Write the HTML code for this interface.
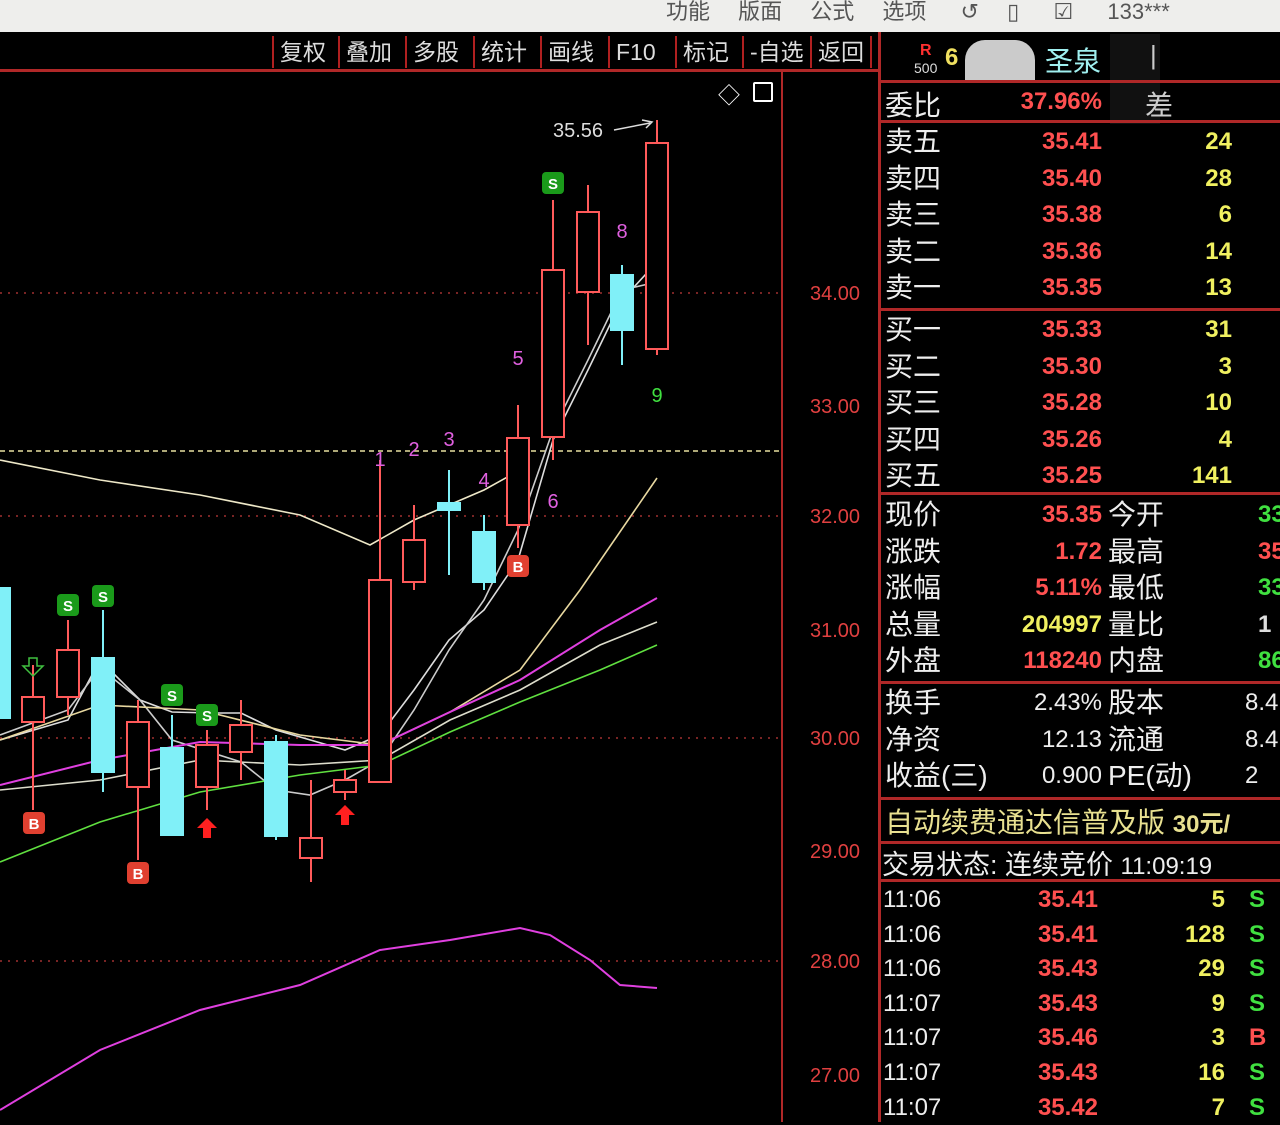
<!DOCTYPE html>
<html><head><meta charset="utf-8"><style>
body{margin:0;width:1280px;height:1122px;background:#000;overflow:hidden;position:relative;font-family:"Liberation Sans","Noto Sans CJK SC",sans-serif}
.a{position:absolute;white-space:nowrap}
.top{left:0;top:0;width:1280px;height:32px;background:#eeeeec}
.tb{top:36px;height:32px;line-height:32px;font-size:23px;color:#ddd;border-left:2px solid #b02020;padding:0 6px}
.lab{left:885px;font-size:28px;color:#eee}
.red{color:#ff5050;font-weight:bold;font-size:24px;text-align:right}
.yel{color:#f0f060;font-weight:bold;font-size:24px;text-align:right}
.grn{color:#40e040;font-weight:bold;font-size:24px}
.wht{color:#eee;font-weight:bold;font-size:24px;text-align:right}
.hl{height:3px;background:#b02828;left:880px;width:400px}
</style></head><body>
<div class="a top"></div>
<div class="a" style="left:666px;top:-6px;font-size:22px;color:#555">功能　 版面 　公式 　选项 　 ↺ 　▯ 　 ☑ 　 133***</div>
<div class="a tb" style="left:272px">复权</div><div class="a tb" style="left:338px">叠加</div><div class="a tb" style="left:405px">多股</div><div class="a tb" style="left:473px">统计</div><div class="a tb" style="left:540px">画线</div><div class="a tb" style="left:608px">F10</div><div class="a tb" style="left:675px">标记</div><div class="a tb" style="left:742px">-自选</div><div class="a tb" style="left:810px;border-right:2px solid #b02020">返回</div>
<div class="a" style="left:0;top:69px;width:880px;height:3px;background:#b02828"></div>
<div class="a" style="left:781px;top:72px;width:2px;height:1050px;background:#b02828"></div>
<div class="a" style="left:878px;top:32px;width:3px;height:1090px;background:#b02828"></div>
<div class="a" style="left:718px;top:78px;font-size:22px;color:#fff">◇</div>
<div class="a" style="left:753px;top:82px;width:16px;height:16px;border:2px solid #fff;border-radius:2px"></div>
<svg class="a" style="left:0;top:0" width="880" height="1122">
<g stroke="#a03030" stroke-dasharray="2 6" stroke-width="1.5"><line x1="0" y1="293" x2="780" y2="293"/><line x1="0" y1="516" x2="780" y2="516"/><line x1="0" y1="738" x2="780" y2="738"/><line x1="0" y1="961" x2="780" y2="961"/></g>
<line x1="0" y1="451" x2="780" y2="451" stroke="#e8e0a0" stroke-dasharray="5 4" stroke-width="1.5"/>
<g fill="#e04040" font-size="20"><text x="810" y="300">34.00</text><text x="810" y="413">33.00</text><text x="810" y="523">32.00</text><text x="810" y="637">31.00</text><text x="810" y="745">30.00</text><text x="810" y="858">29.00</text><text x="810" y="968">28.00</text><text x="810" y="1082">27.00</text></g>
<g fill="none" stroke-width="1.6">
<polyline stroke="#eee8c8" points="0,460 100,480 200,495 300,515 370,545 414,520 449,505 484,490 520,470"/>
<polyline stroke="#ddd" points="0,740 68,720 100,660 140,700 172,712 210,713 241,713 276,730 345,750 380,735 414,690 449,640 484,610 518,560 553,440 588,370 622,300 657,262"/>
<polyline stroke="#ccc" points="0,735 68,710 100,668 140,700 172,740 241,762 276,790 310,795 345,780 380,760 414,710 449,650 484,600 518,530 553,430 588,360 622,290 657,282"/>
<polyline stroke="#e8d8a0" points="0,740 100,705 200,710 300,735 380,745 450,712 520,670 580,590 657,478"/>
<polyline stroke="#e040e0" stroke-width="2" points="0,785 100,760 200,742 300,745 380,745 450,712 520,680 600,630 657,598"/>
<polyline stroke="#ddc" points="0,790 100,780 200,760 300,765 380,760 450,720 520,690 600,645 657,622"/>
<polyline stroke="#60e040" points="0,862 100,822 200,792 300,775 380,765 450,732 520,702 600,670 657,645"/>
<polyline stroke="#e040e0" stroke-width="2" points="0,1110 100,1050 200,1010 300,985 380,950 450,940 520,928 550,935 590,960 620,985 657,988"/>
</g>
<g stroke="#ff5a5a" stroke-width="2" fill="none">
<line x1="33" y1="665" x2="33" y2="810"/><rect x="22" y="697" width="22" height="25" fill="#000"/>
<line x1="68" y1="620" x2="68" y2="715"/><rect x="57" y="650" width="22" height="47" fill="#000"/>
<line x1="138" y1="700" x2="138" y2="860"/><rect x="127" y="722" width="22" height="65" fill="#000"/>
<line x1="207" y1="730" x2="207" y2="810"/><rect x="196" y="745" width="22" height="42" fill="#000"/>
<line x1="241" y1="700" x2="241" y2="780"/><rect x="230" y="725" width="22" height="27" fill="#000"/>
<line x1="311" y1="780" x2="311" y2="882"/><rect x="300" y="838" width="22" height="20" fill="#000"/>
<line x1="345" y1="770" x2="345" y2="800"/><rect x="334" y="780" width="22" height="12" fill="#000"/>
<line x1="380" y1="460" x2="380" y2="782" stroke-dasharray="0"/><rect x="369" y="580" width="22" height="202" fill="#000"/>
<line x1="414" y1="505" x2="414" y2="590"/><rect x="403" y="540" width="22" height="42" fill="#000"/>
<line x1="518" y1="405" x2="518" y2="548"/><rect x="507" y="438" width="22" height="87" fill="#000"/>
<line x1="553" y1="200" x2="553" y2="460"/><rect x="542" y="270" width="22" height="167" fill="#000"/>
<line x1="588" y1="185" x2="588" y2="345"/><rect x="577" y="212" width="22" height="80" fill="#000"/>
<line x1="657" y1="120" x2="657" y2="355"/><rect x="646" y="143" width="22" height="206" fill="#000"/>
</g>
<g stroke="#80f0f8" stroke-width="2" fill="#80f0f8">
<rect x="0" y="588" width="10" height="130"/>
<line x1="103" y1="610" x2="103" y2="792"/><rect x="92" y="658" width="22" height="114"/>
<line x1="172" y1="715" x2="172" y2="836"/><rect x="161" y="748" width="22" height="87"/>
<line x1="276" y1="735" x2="276" y2="840"/><rect x="265" y="742" width="22" height="94"/>
<line x1="449" y1="470" x2="449" y2="575"/><rect x="438" y="503" width="22" height="7"/>
<line x1="484" y1="515" x2="484" y2="590"/><rect x="473" y="532" width="22" height="50"/>
<line x1="622" y1="265" x2="622" y2="365"/><rect x="611" y="275" width="22" height="55"/>
</g>
<g font-size="15" font-weight="bold" text-anchor="middle">
<rect x="57" y="594" width="22" height="22" rx="4" fill="#1a9a1a"/><text x="68" y="611" fill="#fff">S</text>
<rect x="92" y="585" width="22" height="22" rx="4" fill="#1a9a1a"/><text x="103" y="602" fill="#fff">S</text>
<rect x="161" y="684" width="22" height="22" rx="4" fill="#1a9a1a"/><text x="172" y="701" fill="#fff">S</text>
<rect x="196" y="704" width="22" height="22" rx="4" fill="#1a9a1a"/><text x="207" y="721" fill="#fff">S</text>
<rect x="542" y="172" width="22" height="22" rx="4" fill="#1a9a1a"/><text x="553" y="189" fill="#fff">S</text>
<rect x="23" y="812" width="22" height="22" rx="4" fill="#e04030"/><text x="34" y="829" fill="#fff">B</text>
<rect x="127" y="862" width="22" height="22" rx="4" fill="#e04030"/><text x="138" y="879" fill="#fff">B</text>
<rect x="507" y="555" width="22" height="22" rx="4" fill="#e04030"/><text x="518" y="572" fill="#fff">B</text>
</g>
<path d="M207 818 l10 10 h-6 v10 h-8 v-10 h-6z" fill="#ff2020"/><path d="M345 805 l10 10 h-6 v10 h-8 v-10 h-6z" fill="#ff2020"/>
<path d="M33 676 l10 -10 h-6 v-8 h-8 v8 h-6z" fill="none" stroke="#40c040" stroke-width="1.5"/>
<g font-size="20" fill="#e060e0" text-anchor="middle"><text x="380" y="466">1</text><text x="414" y="456">2</text><text x="449" y="446">3</text><text x="484" y="487">4</text><text x="518" y="365">5</text><text x="553" y="508">6</text><text x="622" y="238">8</text></g>
<text x="657" y="402" font-size="20" fill="#40e040" text-anchor="middle">9</text>
<text x="553" y="137" font-size="20" fill="#ddd">35.56</text><path d="M614 130 L650 123 M642 120 L652 122 L646 128" stroke="#ddd" fill="none" stroke-width="1.5"/>
</svg>
<!-- right panel -->
<div class="a" style="left:920px;top:42px;color:#ff3030;font-size:16px;font-weight:bold">R</div>
<div class="a" style="left:914px;top:60px;color:#ddd;font-size:14px">500</div>
<div class="a" style="left:945px;top:44px;color:#f0e060;font-size:24px;font-weight:bold">6</div>
<div class="a" style="left:965px;top:40px;width:70px;height:40px;background:#eee;border-radius:20px 20px 0 0;opacity:.85"></div>
<div class="a" style="left:1045px;top:40px;color:#a0f0f0;font-size:28px">圣泉</div>
<div class="a" style="left:1110px;top:34px;width:50px;height:90px;background:#111"></div>
<div class="a" style="left:1150px;top:40px;color:#ccc;font-size:26px">|</div>
<div class="a hl" style="top:80px"></div>
<div class="a lab" style="top:84px">委比</div><div class="a red" style="left:1000px;width:102px;top:88px">37.96%</div><div class="a" style="left:1145px;top:84px;font-size:28px;color:#ccc">差</div>
<div class="a hl" style="top:120px"></div>
<div class="a lab" style="top:124px;line-height:36.6px">卖五<br>卖四<br>卖三<br>卖二<br>卖一</div>
<div class="a red" style="left:1000px;width:102px;top:124px;line-height:36.6px">35.41<br>35.40<br>35.38<br>35.36<br>35.35</div>
<div class="a yel" style="left:1150px;width:82px;top:124px;line-height:36.6px">24<br>28<br>6<br>14<br>13</div>
<div class="a hl" style="top:308px"></div>
<div class="a lab" style="top:312px;line-height:36.6px">买一<br>买二<br>买三<br>买四<br>买五</div>
<div class="a red" style="left:1000px;width:102px;top:312px;line-height:36.6px">35.33<br>35.30<br>35.28<br>35.26<br>35.25</div>
<div class="a yel" style="left:1150px;width:82px;top:312px;line-height:36.6px">31<br>3<br>10<br>4<br>141</div>
<div class="a hl" style="top:492px"></div>
<div class="a lab" style="top:497px;line-height:36.6px">现价<br>涨跌<br>涨幅<br>总量<br>外盘</div>
<div class="a red" style="left:1000px;width:102px;top:497px;line-height:36.6px">35.35<br>1.72<br>5.11%<br><span style="color:#f0f060">204997</span><br>118240</div>
<div class="a lab" style="left:1108px;top:497px;line-height:36.6px">今开<br>最高<br>最低<br>量比<br>内盘</div>
<div class="a grn" style="left:1258px;top:497px;line-height:36.6px">33<br><span style="color:#ff5050">35</span><br>33<br><span style="color:#ddd">1</span><br>86</div>
<div class="a hl" style="top:681px"></div>
<div class="a lab" style="top:685px;line-height:36.6px">换手<br>净资<br>收益(三)</div>
<div class="a wht" style="left:1000px;width:102px;top:685px;line-height:36.6px;font-weight:normal">2.43%<br>12.13<br>0.900</div>
<div class="a lab" style="left:1108px;top:685px;line-height:36.6px">股本<br>流通<br>PE(动)</div>
<div class="a wht" style="left:1245px;top:685px;line-height:36.6px;font-weight:normal;text-align:left">8.4<br>8.4<br>2</div>
<div class="a hl" style="top:797px"></div>
<div class="a" style="left:885px;top:801px;font-size:28px;color:#e8e090">自动续费通达信普及版 <b style="font-size:24px">30元/</b></div>
<div class="a hl" style="top:841px"></div>
<div class="a" style="left:882px;top:843px;font-size:27px;color:#eee">交易状态: 连续竞价 <span style="font-size:24px">11:09:19</span></div>
<div class="a hl" style="top:879px"></div>
<div class="a wht" style="left:883px;top:883px;line-height:34.6px;text-align:left;font-weight:normal">11:06<br>11:06<br>11:06<br>11:07<br>11:07<br>11:07<br>11:07</div>
<div class="a red" style="left:1000px;width:98px;top:883px;line-height:34.6px">35.41<br>35.41<br>35.43<br>35.43<br>35.46<br>35.43<br>35.42</div>
<div class="a yel" style="left:1150px;width:75px;top:883px;line-height:34.6px">5<br>128<br>29<br>9<br>3<br>16<br>7</div>
<div class="a grn" style="left:1249px;top:883px;line-height:34.6px">S<br>S<br>S<br>S<br><span style="color:#ff5050">B</span><br>S<br>S</div>
</body></html>
